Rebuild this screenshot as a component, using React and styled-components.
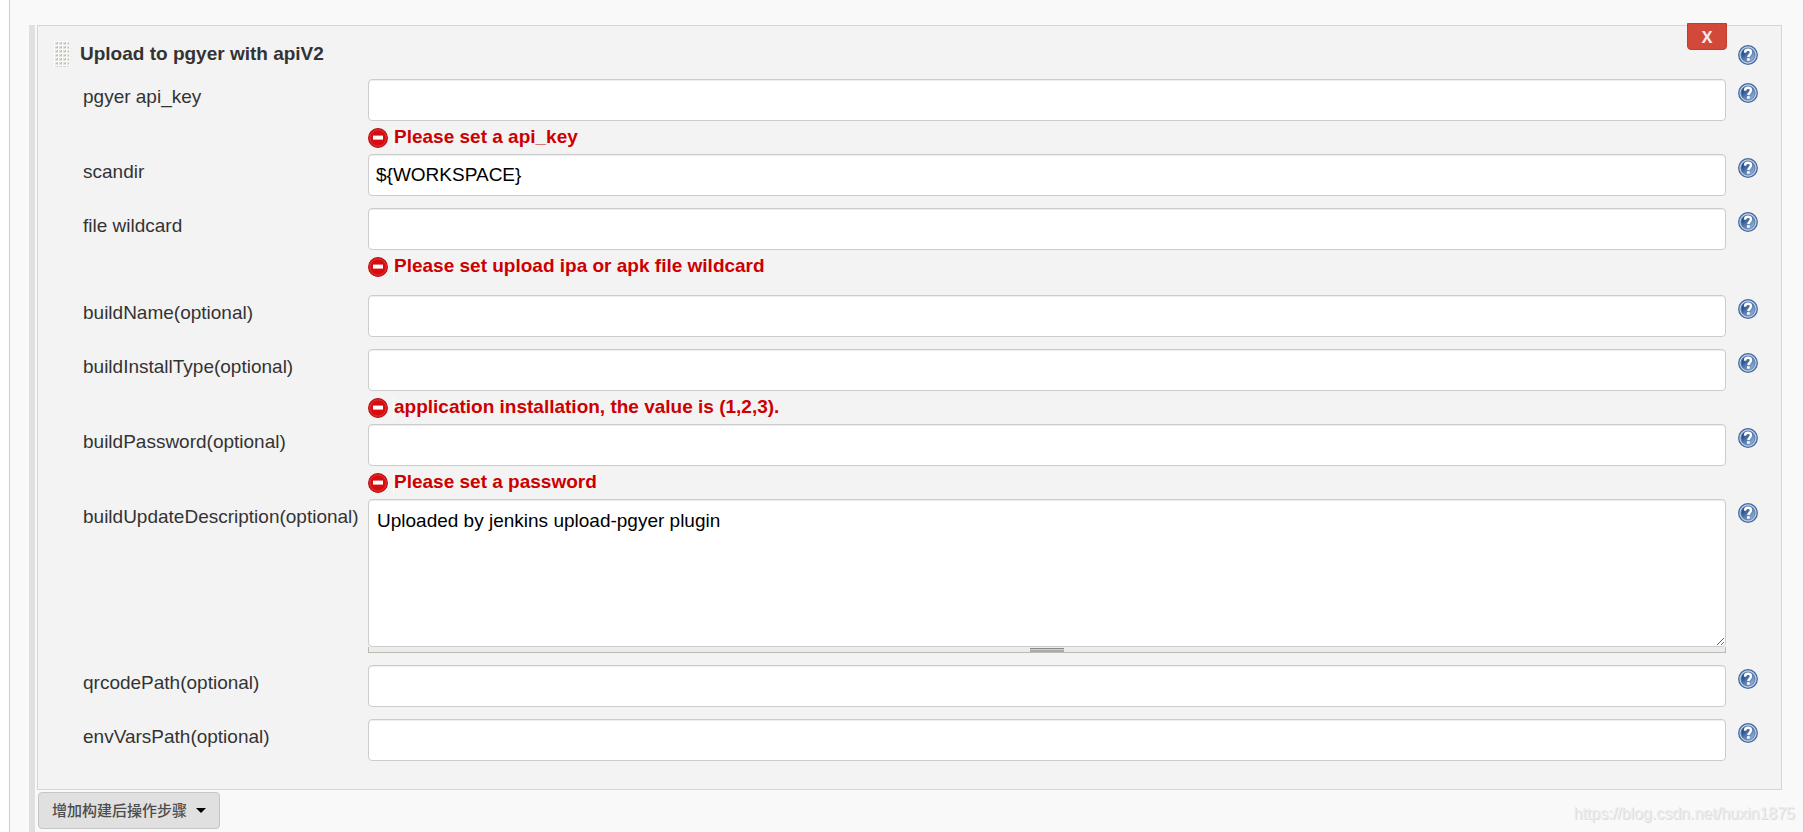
import React from "react";
import styled, { createGlobalStyle } from "styled-components";

const fields = [
  { id: "apiKey", label: "pgyer api_key", error: "Please set a api_key" },
  { id: "scandir", label: "scandir", value: "${WORKSPACE}" },
  { id: "wildcard", label: "file wildcard", error: "Please set upload ipa or apk file wildcard", spaced: true },
  { id: "buildName", label: "buildName(optional)" },
  { id: "buildInstallType", label: "buildInstallType(optional)", error: "application installation, the value is (1,2,3)." },
  { id: "buildPassword", label: "buildPassword(optional)", error: "Please set a password" },
  { id: "buildUpdateDescription", label: "buildUpdateDescription(optional)", value: "Uploaded by jenkins upload-pgyer plugin", multiline: true },
  { id: "qrcodePath", label: "qrcodePath(optional)" },
  { id: "envVarsPath", label: "envVarsPath(optional)" },
];

const Help = ({ topic }) => (
  <HelpButton type="button" aria-label={`Help for ${topic}`}>
    <svg width="20" height="20" viewBox="0 0 20 20">
      <defs>
        <linearGradient id="helpFill" x1="0" y1="0" x2="1" y2="1">
          <stop offset="0.25" stopColor="#24508f" />
          <stop offset="1" stopColor="#b4c8e2" />
        </linearGradient>
      </defs>
      <circle cx="10" cy="10" r="9.3" fill="#c3d2e6" stroke="#44699f" strokeWidth="1.3" />
      <circle cx="10" cy="10" r="7" fill="url(#helpFill)" stroke="#4b73ab" strokeWidth="0.8" />
      <path d="M7 7.8C7 5.7 8.3 4.8 10 4.8c1.8 0 3 1 3 2.5 0 2.2-2.6 2.3-2.6 4.8" fill="none" stroke="#fff" strokeWidth="2.4" />
      <rect x="9.1" y="13.2" width="2.6" height="2.5" fill="#fff" />
    </svg>
  </HelpButton>
);

const ErrorIcon = () => (
  <svg width="20" height="20" viewBox="0 0 20 20" aria-hidden="true">
    <circle cx="10" cy="10" r="9.4" fill="#d90b0f" stroke="#b31217" strokeWidth="1.2" />
    <circle cx="10" cy="10" r="8.2" fill="none" stroke="#e0383b" />
    <rect x="5" y="7.6" width="10" height="4" fill="#fff" />
  </svg>
);

const Grip = () => (
  <GripHandle width="15" height="26" viewBox="0 0 15 26" aria-hidden="true">
    <defs>
      <pattern id="gripDots" width="4" height="4" patternUnits="userSpaceOnUse">
        <rect width="4" height="4" fill="#fbfbfa" />
        <rect x="1" y="1" width="3" height="3" fill="#e2e1de" />
        <rect x="2" y="2" width="2" height="1" fill="#c2c1bc" />
        <rect x="3" y="1" width="1" height="2" fill="#c2c1bc" />
      </pattern>
    </defs>
    <rect width="15" height="26" fill="url(#gripDots)" />
  </GripHandle>
);

const Field = ({ id, label, value, error, spaced, multiline }) => (
  <Row $spaced={spaced}>
    <Label htmlFor={id}>{label}</Label>
    <Control $hasError={Boolean(error)}>
      {multiline ? (
        <>
          <TextArea id={id} defaultValue={value} spellCheck={false} />
          <ResizeBar><span /></ResizeBar>
        </>
      ) : (
        <Input id={id} type="text" defaultValue={value} aria-describedby={error ? `${id}-error` : undefined} />
      )}
      {error && (
        <ErrorMessage id={`${id}-error`}>
          <ErrorIcon />
          <span>{error}</span>
        </ErrorMessage>
      )}
    </Control>
    <Help topic={label} />
  </Row>
);

const App = () => (
  <>
    <GlobalStyle />
    <Page>
      <Steps>
        <Panel>
          <Header>
            <Grip />
            <Title>Upload to pgyer with apiV2</Title>
            <DeleteButton type="button" aria-label="Delete">X</DeleteButton>
            <Help topic="Upload to pgyer with apiV2" />
          </Header>
          <Fields>
            {fields.map((field) => <Field key={field.id} {...field} />)}
          </Fields>
        </Panel>
        <AddButton type="button">
          增加构建后操作步骤
          <svg width="10" height="5" viewBox="0 0 10 5" aria-hidden="true"><path d="M0 0h10L5 5z" /></svg>
        </AddButton>
      </Steps>
      <Watermark>https://blog.csdn.net/huxin1875</Watermark>
    </Page>
  </>
);

export default App;

const GlobalStyle = createGlobalStyle`
  * {
    box-sizing: border-box;
  }

  body {
    margin: 0;
    background: #fff;
    color: #333;
    font-family: "Liberation Sans", Arial, "Noto Sans CJK SC", sans-serif;
    font-size: 19px;
    line-height: 22px;
  }

  button, input, textarea {
    font: inherit;
  }
`;

const Page = styled.main`
  position: relative;
  min-height: 100vh;
  margin-left: 9px;
  padding: 25px 21px 0 19px;
  background: #f9f9f9;
  border: solid #ccc;
  border-width: 0 1px;
`;

const Steps = styled.div`
  min-height: calc(100vh - 25px);
  padding-left: 2px;
  border-left: 6px solid #e0e0e0;
`;

const Panel = styled.section`
  padding: 0 23px 16px 16px;
  background: #f3f3f3;
  border: 1px solid #d6d6d6;
`;

const Header = styled.header`
  display: flex;
  align-items: flex-start;
  height: 53px;
`;

const GripHandle = styled.svg`
  margin-top: 15px;
`;

const Title = styled.h2`
  flex: 1;
  margin: 17px 0 0 11px;
  font-size: 19px;
`;

const DeleteButton = styled.button`
  width: 40px;
  height: 27px;
  margin: -3px 11px 0 0;
  padding: 0;
  background: #d24939;
  border: 1px solid #c43c2e;
  border-radius: 0 0 4px 4px;
  color: #f3e9e8;
  font-family: "Open Sans", sans-serif;
  font-size: 16px;
  font-weight: 700;
  line-height: 24px;
`;

const HelpButton = styled.button`
  flex: none;
  width: 20px;
  height: 20px;
  padding: 0;
  background: none;
  border: 0;
  cursor: pointer;

  svg {
    display: block;
  }

  ${Header} & {
    margin-top: 19px;
  }
`;

const Fields = styled.div`
  padding-left: 29px;
`;

const Row = styled.div`
  display: grid;
  grid-template-columns: 273px minmax(0, 1fr) 20px;
  column-gap: 12px;
  align-items: start;
  margin-bottom: ${({ $spaced }) => ($spaced ? "12px" : "0")};

  ${HelpButton} {
    margin-top: 4px;
  }
`;

const Label = styled.label`
  padding-top: 7px;
  white-space: nowrap;
`;

const Control = styled.div`
  display: flex;
  flex-direction: column;
  padding-bottom: ${({ $hasError }) => ($hasError ? "0" : "12px")};
`;

const Input = styled.input`
  width: 100%;
  height: 42px;
  padding: 0 7px;
  background: #fff;
  border: 1px solid #ccc;
  border-radius: 4px;
  box-shadow: inset 0 1px 1px rgba(0, 0, 0, 0.075);
  color: #000;
`;

const TextArea = styled.textarea`
  display: block;
  width: 100%;
  height: 148px;
  padding: 10px 8px;
  background: #fff;
  border: 1px solid #ccc;
  border-radius: 4px;
  box-shadow: inset 0 1px 1px rgba(0, 0, 0, 0.075);
  color: #000;
  resize: vertical;
`;

const ResizeBar = styled.div`
  display: flex;
  justify-content: center;
  height: 6px;
  background: #ececec;
  border: solid #bbbbb3;
  border-width: 0 1px 1px;

  span {
    width: 34px;
    height: 4px;
    margin-top: 1px;
    background: linear-gradient(#888 25%, #d0d0d0 25% 50%, #aaa 50%);
  }
`;

const ErrorMessage = styled.p`
  display: flex;
  align-items: flex-start;
  height: 33px;
  margin: 0;
  padding-top: 7px;
  color: #c00;
  font-weight: 700;

  span {
    height: 20px;
    margin-left: 5px;
    border-left: 1px solid #fff;
    line-height: 18px;
  }
`;

const AddButton = styled.button`
  display: flex;
  align-items: center;
  gap: 9px;
  height: 37px;
  margin: 2px 0 0 1px;
  padding: 0 13px;
  background: #e0e0e0;
  border: 1px solid #c6c6c6;
  border-radius: 4px;
  color: #4d4d4d;
  font-size: 15px;
  font-weight: 500;
`;

/* sits over the bottom corner of the page */
const Watermark = styled.div`
  position: absolute;
  right: 8px;
  bottom: 8px;
  color: #ececec;
  font-size: 16px;
  line-height: 20px;
  text-shadow: 1px 1px 0 #dcdcdc;
`;
